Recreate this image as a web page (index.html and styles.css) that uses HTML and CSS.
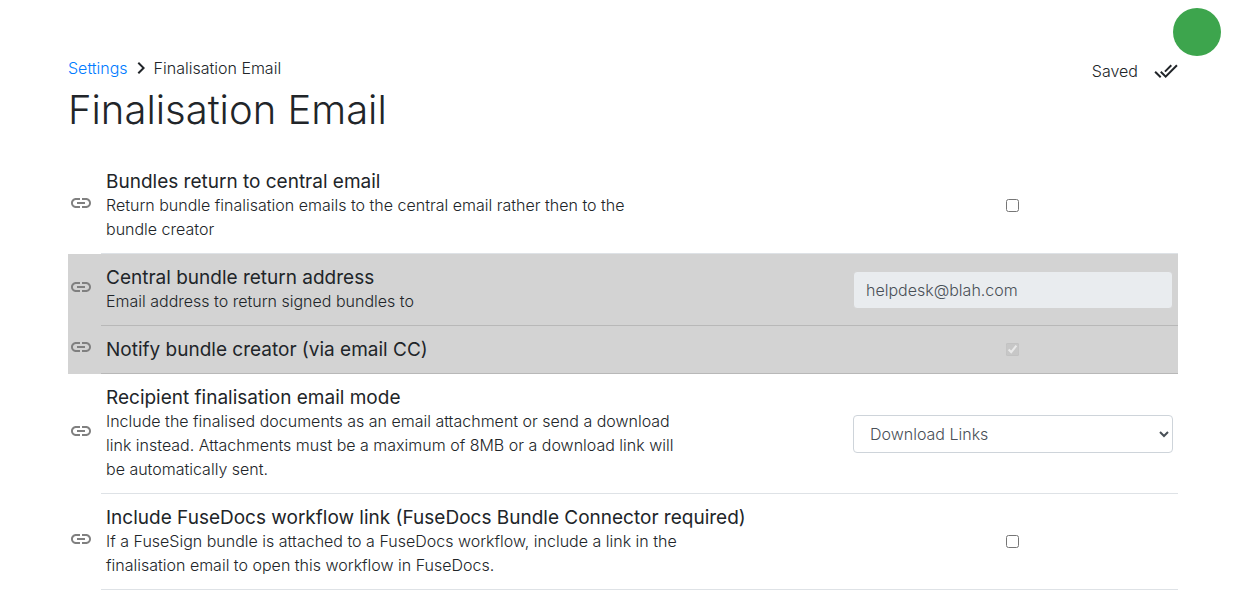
FILE: index.html
```html
<!DOCTYPE html>
<html lang="en">
<head>
    <meta charset="UTF-8">
    <meta name="viewport" content="width=device-width, initial-scale=1.0">
    <title>Finalisation Email</title>
    <link rel="stylesheet" href="styles.css">
</head>
<body>
    <svg class="symbols" aria-hidden="true">
        <symbol id="icon-link" viewBox="0 0 24 24">
            <path d="M3.9 12c0-1.71 1.39-3.1 3.1-3.1h4V7H7c-2.76 0-5 2.24-5 5s2.24 5 5 5h4v-1.9H7c-1.71 0-3.1-1.39-3.1-3.1zM8 13h8v-2H8v2zm9-6h-4v1.9h4c1.71 0 3.1 1.39 3.1 3.1s-1.39 3.1-3.1 3.1h-4V17h4c2.76 0 5-2.24 5-5s-2.24-5-5-5z"/>
        </symbol>
    </svg>

    <div class="avatar"></div>

    <main class="page">
        <header class="page-header">
            <div>
                <nav class="breadcrumb">
                    <a href="#">Settings</a>
                    <svg class="chevron" viewBox="0 0 24 24"><path d="M10 6L8.59 7.41 13.17 12l-4.58 4.59L10 18l6-6z"/></svg>
                    <span>Finalisation Email</span>
                </nav>
                <h1>Finalisation Email</h1>
            </div>
            <div class="save-status">
                <span>Saved</span>
                <svg class="done-icon" viewBox="0 0 24 24"><path d="M18 7l-1.41-1.41-6.34 6.34 1.41 1.41L18 7zm4.24-1.41L11.66 16.17 7.48 12l-1.41 1.41L11.66 19l12-12-1.42-1.41zM.41 13.41L6 19l1.41-1.41L1.83 12 .41 13.41z"/></svg>
            </div>
        </header>

        <div class="settings">
            <div class="setting">
                <a class="setting-link" href="#central" aria-label="Link to setting"><svg><use href="#icon-link"/></svg></a>
                <div class="setting-body" id="central">
                    <div class="setting-text">
                        <label for="centralEmail">Bundles return to central email</label>
                        <p>Return bundle finalisation emails to the central email rather then to the bundle creator</p>
                    </div>
                    <div class="setting-control"><input type="checkbox" id="centralEmail"></div>
                </div>
            </div>

            <div class="setting disabled">
                <a class="setting-link" href="#address" aria-label="Link to setting"><svg><use href="#icon-link"/></svg></a>
                <div class="setting-body" id="address">
                    <div class="setting-text">
                        <label for="returnAddress">Central bundle return address</label>
                        <p>Email address to return signed bundles to</p>
                    </div>
                    <div class="setting-control"><input type="email" class="form-control" id="returnAddress" value="helpdesk@blah.com" disabled></div>
                </div>
            </div>

            <div class="setting disabled">
                <a class="setting-link" href="#notify" aria-label="Link to setting"><svg><use href="#icon-link"/></svg></a>
                <div class="setting-body" id="notify">
                    <div class="setting-text">
                        <label for="notifyCreator">Notify bundle creator (via email CC)</label>
                    </div>
                    <div class="setting-control"><input type="checkbox" id="notifyCreator" checked disabled></div>
                </div>
            </div>

            <div class="setting">
                <a class="setting-link" href="#mode" aria-label="Link to setting"><svg><use href="#icon-link"/></svg></a>
                <div class="setting-body" id="mode">
                    <div class="setting-text">
                        <label for="emailMode">Recipient finalisation email mode</label>
                        <p>Include the finalised documents as an email attachment or send a download link instead. Attachments must be a maximum of 8MB or a download link will be automatically sent.</p>
                    </div>
                    <div class="setting-control">
                        <select class="form-control" id="emailMode">
                            <option>Download Links</option>
                            <option>Attachments</option>
                        </select>
                    </div>
                </div>
            </div>

            <div class="setting">
                <a class="setting-link" href="#workflow" aria-label="Link to setting"><svg><use href="#icon-link"/></svg></a>
                <div class="setting-body" id="workflow">
                    <div class="setting-text">
                        <label for="workflowLink">Include FuseDocs workflow link (FuseDocs Bundle Connector required)</label>
                        <p>If a FuseSign bundle is attached to a FuseDocs workflow, include a link in the finalisation email to open this workflow in FuseDocs.</p>
                    </div>
                    <div class="setting-control"><input type="checkbox" id="workflowLink"></div>
                </div>
            </div>
        </div>
    </main>
</body>
</html>
```

FILE: styles.css
```css
* {
    box-sizing: border-box;
}
body {
    margin: 0;
    font-family: Inter, "Liberation Sans", sans-serif;
    font-size: 16px;
    font-weight: 300;
    line-height: 24px;
    color: #212529;
    background: #fff;
}
a {
    color: #007bff;
    text-decoration: none;
}
.symbols {
    display: none;
}
.avatar {
    position: absolute;
    top: 8px;
    right: 22px;
    width: 48px;
    height: 48px;
    border-radius: 50%;
    background: #3da54d;
}
.page {
    padding: 56px 65px 0 68px;
}
.page-header {
    display: flex;
    justify-content: space-between;
    margin-bottom: 24px;
}
.breadcrumb {
    display: flex;
    align-items: center;
    gap: 1px;
}
.chevron {
    width: 24px;
    height: 24px;
    fill: #212529;
}
h1 {
    margin: 6px 0 0;
    font-size: 40px;
    font-weight: 300;
    line-height: 48px;
}
.save-status {
    display: flex;
    align-items: center;
    gap: 16px;
    height: 30px;
}
.done-icon {
    width: 24px;
    height: 24px;
    fill: #212529;
}
.setting {
    display: flex;
}
.setting.disabled {
    background: #d3d3d3;
}
.setting-link {
    display: flex;
    align-items: center;
    width: 33px;
    padding: 0 0 6px 1px;
}
.setting-link svg {
    width: 24px;
    height: 24px;
    fill: #808080;
}
.setting-body {
    display: flex;
    flex: 1;
    align-items: center;
    border-bottom: 1px solid #dee2e6;
}
.disabled .setting-body {
    border-bottom-color: #b8b8b8;
}
.setting-text {
    flex: 1;
    padding: 13px 5px 12px;
}
.setting-text label {
    display: block;
    font-size: 19px;
    font-weight: 400;
    line-height: 22px;
}
.setting-text p {
    max-width: 571px;
    margin: 0;
}
.setting-control {
    display: flex;
    justify-content: center;
    width: 330px;
    padding: 0 5px;
}
.setting-control input[type="checkbox"] {
    width: 13px;
    height: 13px;
    margin: 0 1px 0 0;
}
.form-control {
    width: 100%;
    height: 38px;
    padding: 6px 12px;
    border: 1px solid #ced4da;
    border-radius: 4px;
    font: inherit;
    color: #495057;
    background: #fff;
}
.form-control:disabled {
    border-color: #d3d3d3;
    background: #e9ecef;
}
```
